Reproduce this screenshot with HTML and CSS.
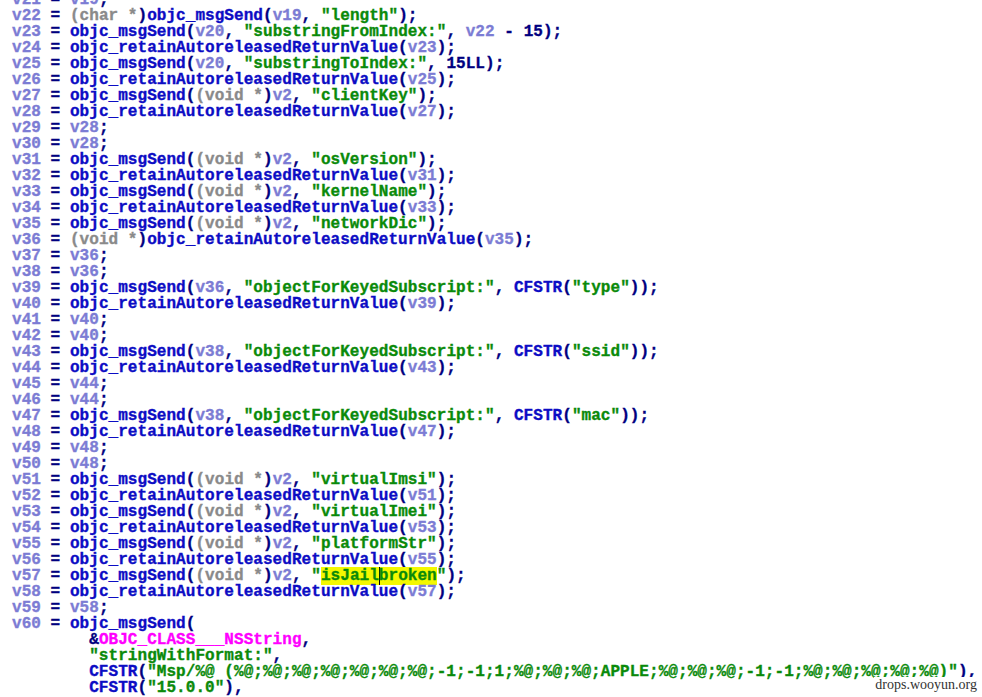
FILE: index.html
```html
<!DOCTYPE html>
<html>
<head>
<meta charset="utf-8">
<link rel="stylesheet" href="styles.css">
</head>
<body>
<pre class="code"><span class="v">v21</span><span class="p"> = </span><span class="v">v19</span><span class="p">;</span>
<span class="v">v22</span><span class="p"> = </span><span class="t">(char *</span><span class="p">)</span><span class="f">objc_msgSend</span><span class="p">(</span><span class="v">v19</span><span class="p">, </span><span class="s">"length"</span><span class="p">);</span>
<span class="v">v23</span><span class="p"> = </span><span class="f">objc_msgSend</span><span class="p">(</span><span class="v">v20</span><span class="p">, </span><span class="s">"substringFromIndex:"</span><span class="p">, </span><span class="v">v22</span><span class="p"> - 15);</span>
<span class="v">v24</span><span class="p"> = </span><span class="f">objc_retainAutoreleasedReturnValue</span><span class="p">(</span><span class="v">v23</span><span class="p">);</span>
<span class="v">v25</span><span class="p"> = </span><span class="f">objc_msgSend</span><span class="p">(</span><span class="v">v20</span><span class="p">, </span><span class="s">"substringToIndex:"</span><span class="p">, 15LL);</span>
<span class="v">v26</span><span class="p"> = </span><span class="f">objc_retainAutoreleasedReturnValue</span><span class="p">(</span><span class="v">v25</span><span class="p">);</span>
<span class="v">v27</span><span class="p"> = </span><span class="f">objc_msgSend</span><span class="p">(</span><span class="t">(void *</span><span class="p">)</span><span class="v">v2</span><span class="p">, </span><span class="s">"clientKey"</span><span class="p">);</span>
<span class="v">v28</span><span class="p"> = </span><span class="f">objc_retainAutoreleasedReturnValue</span><span class="p">(</span><span class="v">v27</span><span class="p">);</span>
<span class="v">v29</span><span class="p"> = </span><span class="v">v28</span><span class="p">;</span>
<span class="v">v30</span><span class="p"> = </span><span class="v">v28</span><span class="p">;</span>
<span class="v">v31</span><span class="p"> = </span><span class="f">objc_msgSend</span><span class="p">(</span><span class="t">(void *</span><span class="p">)</span><span class="v">v2</span><span class="p">, </span><span class="s">"osVersion"</span><span class="p">);</span>
<span class="v">v32</span><span class="p"> = </span><span class="f">objc_retainAutoreleasedReturnValue</span><span class="p">(</span><span class="v">v31</span><span class="p">);</span>
<span class="v">v33</span><span class="p"> = </span><span class="f">objc_msgSend</span><span class="p">(</span><span class="t">(void *</span><span class="p">)</span><span class="v">v2</span><span class="p">, </span><span class="s">"kernelName"</span><span class="p">);</span>
<span class="v">v34</span><span class="p"> = </span><span class="f">objc_retainAutoreleasedReturnValue</span><span class="p">(</span><span class="v">v33</span><span class="p">);</span>
<span class="v">v35</span><span class="p"> = </span><span class="f">objc_msgSend</span><span class="p">(</span><span class="t">(void *</span><span class="p">)</span><span class="v">v2</span><span class="p">, </span><span class="s">"networkDic"</span><span class="p">);</span>
<span class="v">v36</span><span class="p"> = </span><span class="t">(void *</span><span class="p">)</span><span class="f">objc_retainAutoreleasedReturnValue</span><span class="p">(</span><span class="v">v35</span><span class="p">);</span>
<span class="v">v37</span><span class="p"> = </span><span class="v">v36</span><span class="p">;</span>
<span class="v">v38</span><span class="p"> = </span><span class="v">v36</span><span class="p">;</span>
<span class="v">v39</span><span class="p"> = </span><span class="f">objc_msgSend</span><span class="p">(</span><span class="v">v36</span><span class="p">, </span><span class="s">"objectForKeyedSubscript:"</span><span class="p">, </span><span class="f">CFSTR</span><span class="p">(</span><span class="s">"type"</span><span class="p">));</span>
<span class="v">v40</span><span class="p"> = </span><span class="f">objc_retainAutoreleasedReturnValue</span><span class="p">(</span><span class="v">v39</span><span class="p">);</span>
<span class="v">v41</span><span class="p"> = </span><span class="v">v40</span><span class="p">;</span>
<span class="v">v42</span><span class="p"> = </span><span class="v">v40</span><span class="p">;</span>
<span class="v">v43</span><span class="p"> = </span><span class="f">objc_msgSend</span><span class="p">(</span><span class="v">v38</span><span class="p">, </span><span class="s">"objectForKeyedSubscript:"</span><span class="p">, </span><span class="f">CFSTR</span><span class="p">(</span><span class="s">"ssid"</span><span class="p">));</span>
<span class="v">v44</span><span class="p"> = </span><span class="f">objc_retainAutoreleasedReturnValue</span><span class="p">(</span><span class="v">v43</span><span class="p">);</span>
<span class="v">v45</span><span class="p"> = </span><span class="v">v44</span><span class="p">;</span>
<span class="v">v46</span><span class="p"> = </span><span class="v">v44</span><span class="p">;</span>
<span class="v">v47</span><span class="p"> = </span><span class="f">objc_msgSend</span><span class="p">(</span><span class="v">v38</span><span class="p">, </span><span class="s">"objectForKeyedSubscript:"</span><span class="p">, </span><span class="f">CFSTR</span><span class="p">(</span><span class="s">"mac"</span><span class="p">));</span>
<span class="v">v48</span><span class="p"> = </span><span class="f">objc_retainAutoreleasedReturnValue</span><span class="p">(</span><span class="v">v47</span><span class="p">);</span>
<span class="v">v49</span><span class="p"> = </span><span class="v">v48</span><span class="p">;</span>
<span class="v">v50</span><span class="p"> = </span><span class="v">v48</span><span class="p">;</span>
<span class="v">v51</span><span class="p"> = </span><span class="f">objc_msgSend</span><span class="p">(</span><span class="t">(void *</span><span class="p">)</span><span class="v">v2</span><span class="p">, </span><span class="s">"virtualImsi"</span><span class="p">);</span>
<span class="v">v52</span><span class="p"> = </span><span class="f">objc_retainAutoreleasedReturnValue</span><span class="p">(</span><span class="v">v51</span><span class="p">);</span>
<span class="v">v53</span><span class="p"> = </span><span class="f">objc_msgSend</span><span class="p">(</span><span class="t">(void *</span><span class="p">)</span><span class="v">v2</span><span class="p">, </span><span class="s">"virtualImei"</span><span class="p">);</span>
<span class="v">v54</span><span class="p"> = </span><span class="f">objc_retainAutoreleasedReturnValue</span><span class="p">(</span><span class="v">v53</span><span class="p">);</span>
<span class="v">v55</span><span class="p"> = </span><span class="f">objc_msgSend</span><span class="p">(</span><span class="t">(void *</span><span class="p">)</span><span class="v">v2</span><span class="p">, </span><span class="s">"platformStr"</span><span class="p">);</span>
<span class="v">v56</span><span class="p"> = </span><span class="f">objc_retainAutoreleasedReturnValue</span><span class="p">(</span><span class="v">v55</span><span class="p">);</span>
<span class="v">v57</span><span class="p"> = </span><span class="f">objc_msgSend</span><span class="p">(</span><span class="t">(void *</span><span class="p">)</span><span class="v">v2</span><span class="p">, </span><span class="s">"<span class="hl">isJail<span class="cur">broken</span></span>"</span><span class="p">);</span>
<span class="v">v58</span><span class="p"> = </span><span class="f">objc_retainAutoreleasedReturnValue</span><span class="p">(</span><span class="v">v57</span><span class="p">);</span>
<span class="v">v59</span><span class="p"> = </span><span class="v">v58</span><span class="p">;</span>
<span class="v">v60</span><span class="p"> = </span><span class="f">objc_msgSend</span><span class="p">(</span>
<span class="p">        &amp;</span><span class="m">OBJC_CLASS___NSString</span><span class="p">,</span>
        <span class="s">"stringWithFormat:"</span><span class="p">,</span>
        <span class="f">CFSTR</span><span class="p">(</span><span class="s">"Msp/%@ (%@;%@;%@;%@;%@;%@;%@;-1;-1;1;%@;%@;%@;APPLE;%@;%@;%@;-1;-1;%@;%@;%@;%@;%@)"</span><span class="p">),</span>
        <span class="f">CFSTR</span><span class="p">(</span><span class="s">"15.0.0"</span><span class="p">),</span></pre>
<div class="mark">drops.wooyun.org</div>
</body>
</html>
```

FILE: styles.css
```css
html, body {
  margin: 0;
  padding: 0;
  background: #ffffff;
  overflow: hidden;
  height: 697px;
}
.code {
  margin: -8px 0 0 0;
  padding: 0 0 0 12px;
  font-family: "Liberation Mono", "DejaVu Sans Mono", monospace;
  font-weight: bold;
  font-size: 16px;
  line-height: 16px;
  letter-spacing: 0.05px;
  color: #000080;
  white-space: pre;
  -webkit-text-stroke: 0.35px currentColor;
}
.v { color: #7c7cd4; }
.p { color: #000080; }
.f { color: #0c0cc4; }
.s { color: #0a8a0a; }
.t { color: #8a8a8a; }
.m { color: #ff00ff; }
.hl { background: #f4f800; }
.cur { box-shadow: inset 1px 0 0 #000000; }
.mark {
  position: absolute;
  right: 4px;
  bottom: 4px;
  font-family: "Liberation Serif", "DejaVu Serif", serif;
  font-size: 14px;
  color: #333333;
  background: #ffffff;
  padding: 0 1px;
  -webkit-text-stroke: 0;
}
```
